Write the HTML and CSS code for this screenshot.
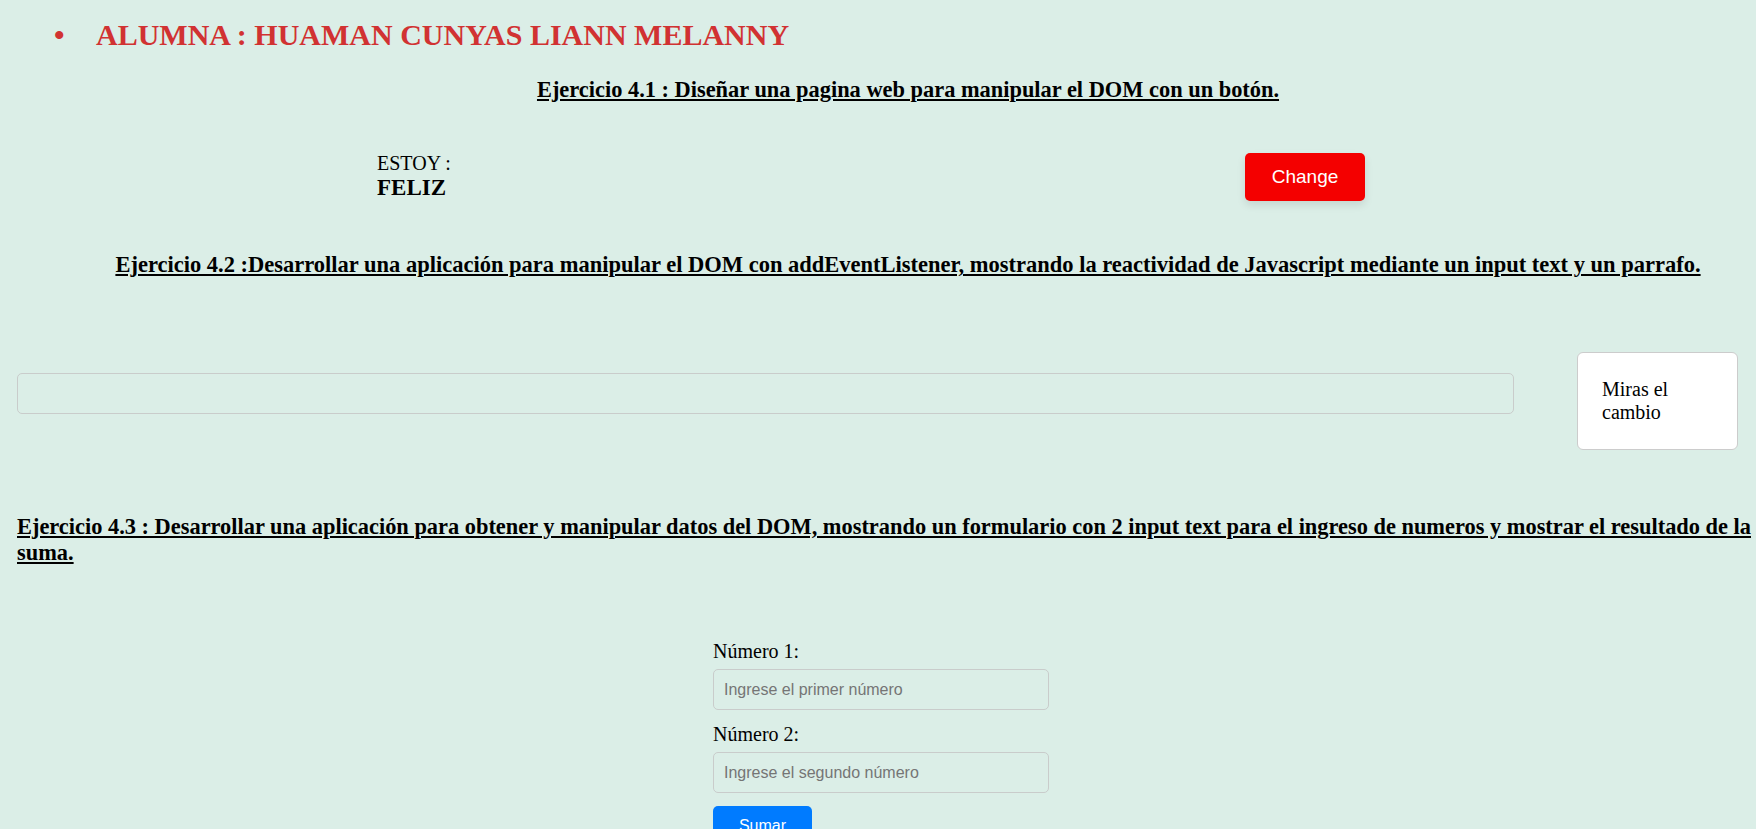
FILE: index.html
```html
<!DOCTYPE html>
<html lang="es">
<head>
<meta charset="utf-8">
<title>Ejercicios DOM</title>
<link rel="stylesheet" href="styles.css">
</head>
<body>
<ul class="student">
  <li class="student-item">ALUMNA : HUAMAN CUNYAS LIANN MELANNY</li>
</ul>
<main class="page">
  <h2 class="ex-title ex-center">Ejercicio 4.1 : Diseñar una pagina web para manipular el DOM con un botón.</h2>
  <div class="mood-row">
    <div class="mood">
      <p class="mood-label">ESTOY :</p>
      <p class="mood-value">FELIZ</p>
    </div>
    <button class="btn-change" type="button">Change</button>
  </div>

  <h2 class="ex-title ex-center ex-42">Ejercicio 4.2 :Desarrollar una aplicación para manipular el DOM con addEventListener, mostrando la reactividad de Javascript mediante un input text y un parrafo.</h2>
  <div class="listener-row">
    <input class="text-input" type="text">
    <div class="echo-box">Miras el cambio</div>
  </div>

  <h2 class="ex-title ex-43">Ejercicio 4.3 : Desarrollar una aplicación para obtener y manipular datos del DOM, mostrando un formulario con 2 input text para el ingreso de numeros y mostrar el resultado de la suma.</h2>
  <form class="sum-form">
    <label class="field-label" for="n1">Número 1:</label>
    <input class="num-input" id="n1" type="text" placeholder="Ingrese el primer número">
    <label class="field-label" for="n2">Número 2:</label>
    <input class="num-input" id="n2" type="text" placeholder="Ingrese el segundo número">
    <button class="btn-sum" type="button">Sumar</button>
  </form>
</main>
</body>
</html>
```

FILE: styles.css
```css
html {
  overflow: hidden;
}

body {
  margin: 0;
  background: #dbeee7;
  font-family: "Liberation Serif", "Times New Roman", serif;
  color: #000;
}

.student {
  list-style: none;
  margin: 18px 0 0;
  padding: 0 0 0 54px;
}

.student-item {
  font-size: 30px;
  font-weight: bold;
  color: #d13232;
}

.student-item::before {
  content: "\2022";
  display: inline-block;
  width: 42px;
}

.page {
  width: 1782px;
  margin-left: 17px;
}

.ex-title {
  font-size: 22.4px;
  font-weight: bold;
  text-decoration: underline;
  margin: 25px 0 0;
}

.ex-center {
  text-align: center;
}

.mood-row {
  display: flex;
  justify-content: space-between;
  align-items: flex-start;
  padding: 0 434px 0 360px;
  margin-top: 49px;
}

.mood p {
  margin: 0;
}

.mood-label {
  font-size: 20px;
}

.mood-value {
  font-size: 23px;
  font-weight: bold;
  margin-top: 1px;
}

.btn-change {
  width: 120px;
  height: 48px;
  margin-top: 1px;
  border: none;
  border-radius: 5px;
  background: #f40000;
  color: #fff;
  font-family: "Liberation Sans", Arial, sans-serif;
  font-size: 19px;
  box-shadow: 0 4px 8px rgba(0, 0, 0, 0.1);
}

.ex-42 {
  margin-top: 51px;
  font-size: 22.5px;
}

.listener-row {
  display: flex;
  align-items: flex-start;
  gap: 63px;
  margin-top: 74px;
}

.text-input {
  box-sizing: border-box;
  width: 1497px;
  height: 41px;
  margin-top: 21px;
  border: 1px solid #c9cccb;
  border-radius: 5px;
  background: transparent;
}

.echo-box {
  box-sizing: border-box;
  width: 161px;
  padding: 25px 24px;
  border: 1px solid #cccccc;
  border-radius: 6px;
  background: #fff;
  font-size: 20px;
}

.ex-43 {
  margin-top: 64px;
}

.sum-form {
  display: flex;
  flex-direction: column;
  align-items: flex-start;
  width: 336px;
  margin: 74px 0 0 696px;
}

.field-label {
  font-size: 20px;
  margin-bottom: 6px;
}

.num-input {
  box-sizing: border-box;
  width: 336px;
  height: 41px;
  margin-bottom: 13px;
  padding: 0 10px;
  border: 1px solid #c9cccb;
  border-radius: 5px;
  background: transparent;
  font-family: "Liberation Sans", Arial, sans-serif;
  font-size: 16px;
}

.num-input::placeholder {
  color: #757575;
}

.btn-sum {
  width: 99px;
  height: 40px;
  border: none;
  border-radius: 5px;
  background: #007bff;
  color: #fff;
  font-family: "Liberation Sans", Arial, sans-serif;
  font-size: 16px;
}
```
